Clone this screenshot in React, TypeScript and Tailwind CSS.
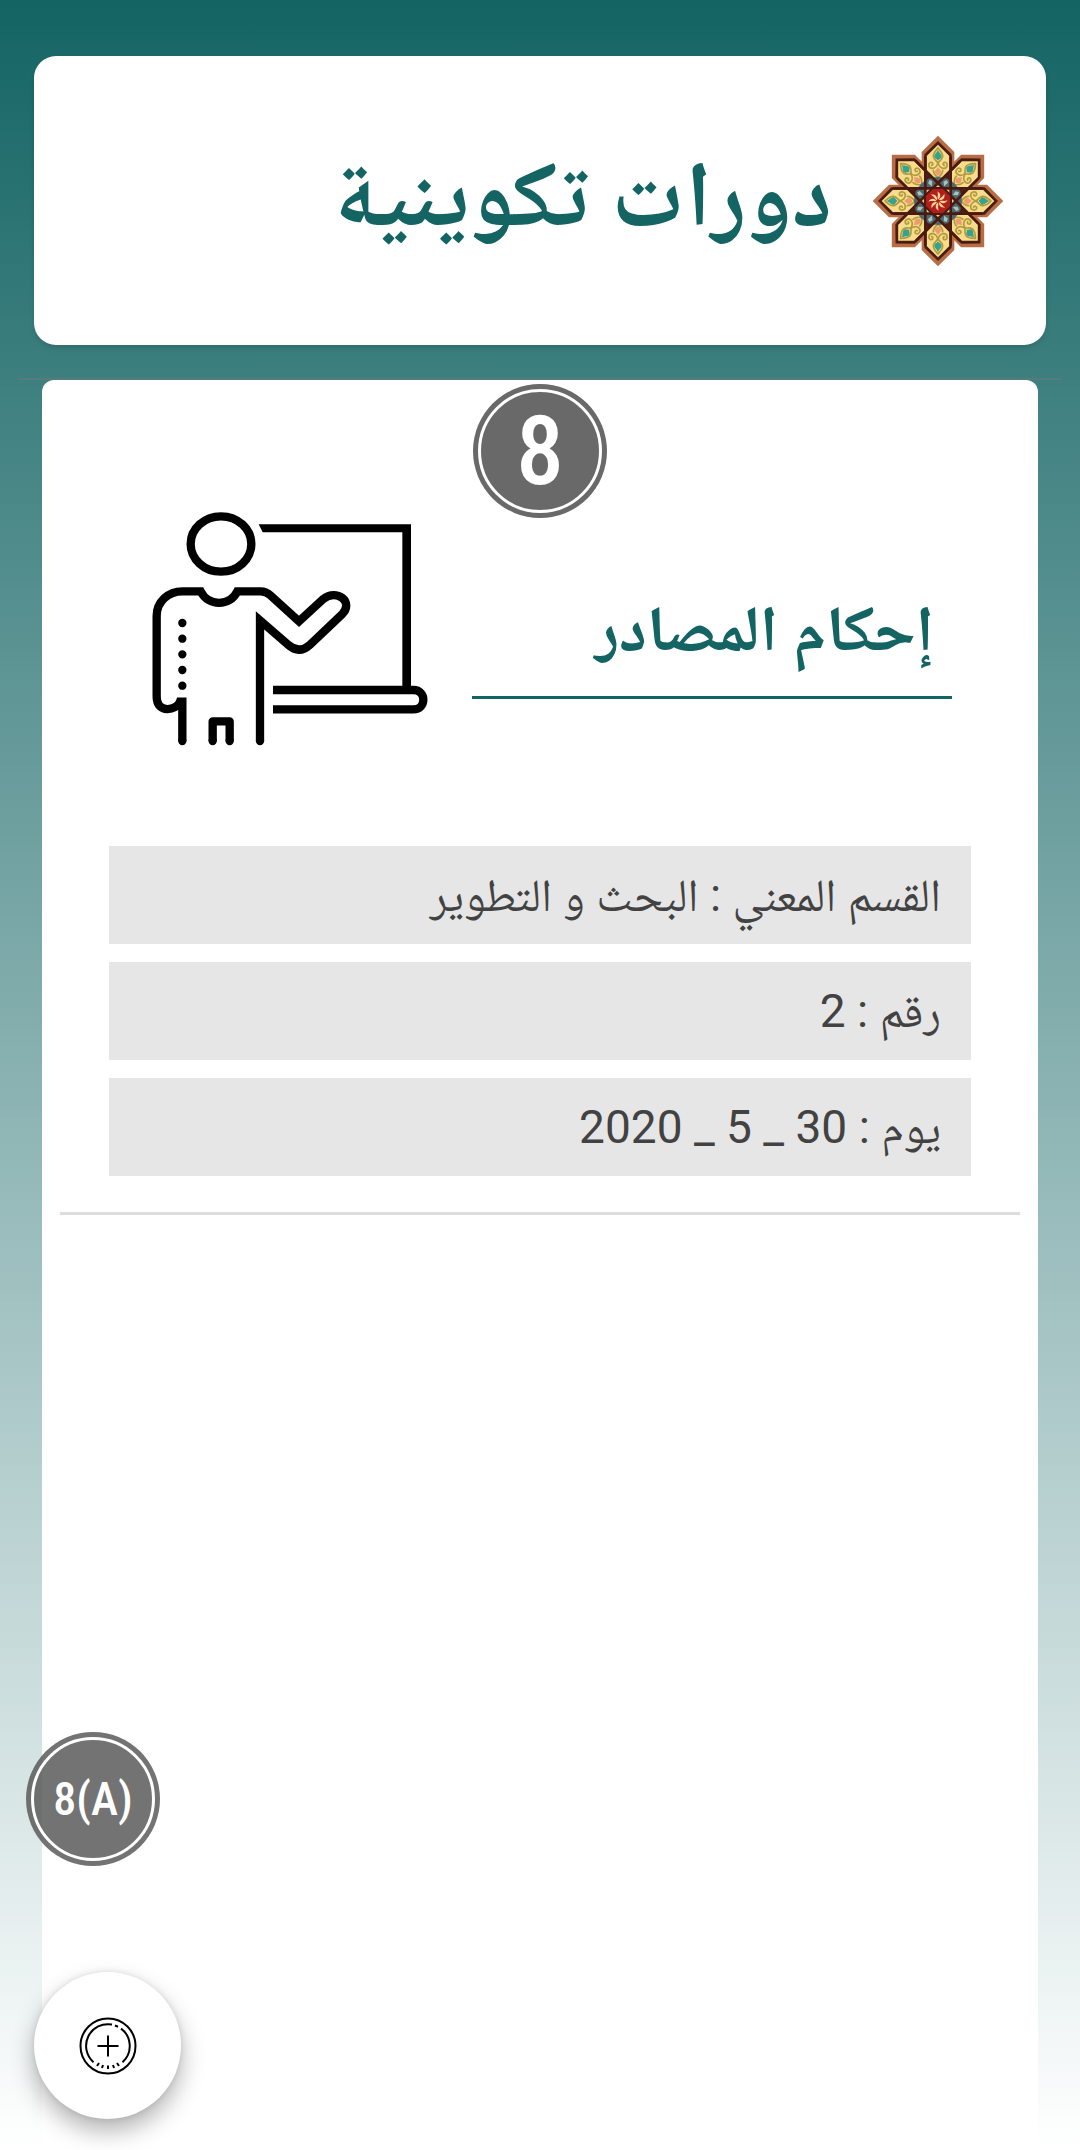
const details = [
  'القسم المعني : البحث و التطوير',
  'رقم : 2',
  'يوم : 30 _ 5 _ 2020',
];

const petals = [45, 135, 225, 315, 0, 90, 180, 270];
const straps = [0, 45, 90, 135];
const rays = [0, 45, 90, 135, 180, 225, 270, 315];

function Rosette() {
  return (
    <svg viewBox="-198 -198 396 396" className="size-[132px] shrink-0" aria-hidden="true">
      {petals.map((a) => (
        <polygon key={a} transform={`rotate(${a})`} points="0,-196 49,-147 49,0 -49,0 -49,-147" fill="#b96d45" />
      ))}
      {petals.map((a) => (
        <polygon key={a} transform={`rotate(${a})`} points="0,-180 41,-140 41,-80 0,-40 -41,-80 -41,-140" fill="#4a1c12" />
      ))}
      {petals.map((a) => (
        <g key={a} transform={`rotate(${a})`}>
          <polygon points="0,-169 34,-135 34,-84 0,-52 -34,-84 -34,-135" fill="#f6dc8b" />
          <g fill="none" stroke="#b29a3e" strokeWidth="5" strokeLinecap="round">
            <path d="M0-159C-8-150-15-143-14-133C-12-123-5-121 0-114C5-121 12-123 14-133C15-143 8-150 0-159" />
            <path d="M0-116C-3-102-10-98-18-98C-28-98-31-113-22-116C-15-117-13-108-19-107" />
            <path d="M0-116C3-102 10-98 18-98C28-98 31-113 22-116C15-117 13-108 19-107" />
            <path d="M-14-92C-14-80-7-75 0-70C7-75 14-80 14-92" />
          </g>
          <path d="M0-154C3-145 12-140 11-133C10-127 4-128 0-121C-4-128-10-127-11-133C-12-140-3-145 0-154Z" fill="#36a18d" />
          <path d="M0-102C4-94 10-93 9-86C8-80 3-79 0-76C-3-79-8-80-9-86C-10-93-4-94 0-102Z" fill="#ee9b70" />
        </g>
      ))}
      <circle r="72" fill="#4c6872" />
      {petals.map((a) => (
        <g key={a} transform={`rotate(${a + 22.5})`}>
          <path d="M-7-60L0-48L7-62L0-68Z" fill="#a9c4b6" />
        </g>
      ))}
      {petals.map((a) => (
        <polygon key={a} transform={`rotate(${a})`} points="0,-54 14,-40 -14,-40" fill="#ead083" />
      ))}
      {straps.map((a) => (
        <g key={a} transform={`rotate(${a})`} stroke="#4a190f" strokeWidth="8">
          <path d="M-38-134V134M38-134V134" />
        </g>
      ))}
      <polygon points="-15,-36 15,-36 36,-15 36,15 15,36 -15,36 -36,15 -36,-15" fill="#b01f1d" />
      {rays.map((a) => (
        <path key={a} transform={`rotate(${a})`} d="M0-4C-3-12 2-16-2-29C9-22 8-13 4-8" fill="#f6d594" />
      ))}
      <circle r="4" fill="#b01f1d" />
    </svg>
  );
}

function TeacherIcon() {
  return (
    <svg viewBox="0 60 960 720" className="h-[240px] w-[320px] shrink-0" fill="none" stroke="#000" strokeWidth="25" aria-hidden="true">
      <ellipse cx="273" cy="162" rx="91" ry="83" />
      <path d="M386 103H843V600H817V127H398Z" fill="#000" stroke="none" />
      <path d="M429 600H850C890 600 890 658 850 658H429" />
      <path d="M157 754V635H150C140 662 80 672 80 620V378C80 335 115 304 157 304H212C235 350 300 350 322 304H392Q408 304 420 315L507 394L580 327C620 295 672 335 637 372L540 464Q507 494 474 464L390 391V754" />
      <path d="M248 754V694H299V754" strokeLinejoin="round" />
      <path d="M157 753v.1M390 753v.1M248 753v.1M299 753v.1M157 399v.1M157 446v.1M157 493v.1M157 540v.1M157 587v.1" strokeLinecap="round" />
    </svg>
  );
}

function AddIcon() {
  return (
    <svg viewBox="-29 -29 58 58" className="size-[58px]" fill="none" stroke="#000" strokeWidth="2" aria-hidden="true">
      <circle r="27.5" />
      <path d="M-14.500 16.200A21.700 21.700 0 0 1 4-21.400M7-20.500L10-19.300M13-17.400A21.700 21.700 0 0 1 14.500 16.200" />
      <path d="M-9 17L-11 20M-5 19L-6 22M0 19.500V23M5 19L6 22M9 17L11 20" />
      <path d="M-10.500 0H10.500M0-10.500V10.500" />
    </svg>
  );
}

const condensed = "font-['Roboto_Condensed','Liberation_Sans_Narrow','DejaVu_Sans_Condensed',sans-serif]";

export default function App() {
  return (
    <div
      dir="rtl"
      lang="ar"
      className="relative flex min-h-screen flex-col bg-linear-to-b/srgb from-[#146464] to-white pt-14 font-[Roboto,'Noto_Naskh_Arabic','Noto_Sans_Arabic','DejaVu_Sans',sans-serif]"
    >
      <header className="mx-[34px] flex h-[289px] items-center gap-10 rounded-[22px] bg-white px-[42px] shadow-md">
        <Rosette />
        <h1 className="pb-3 text-[92px] leading-[120px] font-bold text-[#146464]">دورات تكوينية</h1>
      </header>

      <div className="mx-[18px] mt-[33px] h-0.5 bg-[#587b79]" />

      <main className="mx-[42px] flex grow flex-col rounded-t-xl bg-white pt-1">
        <div className="flex size-[134px] items-center justify-center self-center rounded-full bg-[#696969] p-[5px]">
          <span className={`${condensed} flex size-full items-center justify-center rounded-full border-[3px] border-white text-[96px] leading-none font-medium text-white`}>
            8
          </span>
        </div>

        <section className="-mt-2 flex items-start gap-[22px] pr-[86px] pl-[88px]">
          <div className="mt-[70px] grow border-b-3 border-[#146464] px-[18px] pb-4">
            <h2 className="text-[64px] leading-[100px] font-bold text-[#146464]">إحكام المصادر</h2>
          </div>
          <TeacherIcon />
        </section>

        <ul className="mt-24 flex flex-col gap-[18px] px-[67px] text-[46px] leading-[98px] text-[#424242]">
          {details.map((d) => (
            <li key={d} className="h-[98px] bg-[#e6e6e6] px-[30px]">
              {d}
            </li>
          ))}
        </ul>

        <hr className="mx-[18px] mt-9 border-t-3 border-[#dddddd]" />
      </main>

      <div className="absolute bottom-[284px] left-[26px] flex size-[134px] rounded-full bg-[#5a5a5a]/85 p-[5px]">
        <span dir="ltr" className={`${condensed} flex size-full items-center justify-center rounded-full border-[3px] border-white text-[46px] leading-none font-medium text-white`}>
          8(A)
        </span>
      </div>

      <button
        type="button"
        aria-label="إضافة"
        className="absolute bottom-[31px] left-[34px] flex size-[147px] items-center justify-center rounded-full bg-white shadow-[0_12px_24px_rgba(0,0,0,0.3),0_0_6px_rgba(0,0,0,0.1)]"
      >
        <AddIcon />
      </button>
    </div>
  );
}
